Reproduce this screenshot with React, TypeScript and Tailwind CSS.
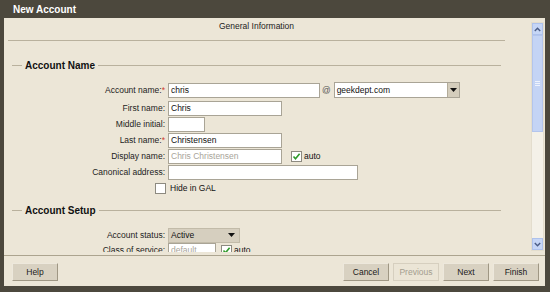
const font={fontFamily:'"Liberation Sans", Arial, sans-serif'};

function Check({on}:{on?:boolean}){
  return(
    <span className="w-[11px] h-[11px] border border-[#8d8a80] bg-white flex items-center justify-center shrink-0">
      {on&&<svg width="9" height="9" viewBox="0 0 9 9"><path d="M1.5 4.5 L3.5 6.8 L7.6 1.8" fill="none" stroke="#2f9a2a" strokeWidth="1.6"/></svg>}
    </span>
  );
}

function Tri(){
  return <svg width="7" height="4" viewBox="0 0 7 4"><path d="M0 0 H7 L3.5 4 Z" fill="#111"/></svg>;
}

function Row({label,req,children,cls=''}:{label:string;req?:boolean;children?:React.ReactNode;cls?:string}){
  return(
    <div className={`flex items-center h-[16px] ${cls}`}>
      <div className="w-[162px] text-right text-[#1c1c1c] pr-[1px] whitespace-nowrap">
        {label}{req&&<span className="text-[#d23a2a]">*</span>}
      </div>
      <div className="ml-[2px] flex items-center">{children}</div>
    </div>
  );
}

function Input({w,val,dim}:{w:number;val?:string;dim?:boolean}){
  return(
    <div className={`h-[15px] bg-white border border-[#a9a496] pl-[2px] leading-[13px] ${dim?'text-[#a8a49a]':'text-[#111]'}`} style={{width:w}}>{val}</div>
  );
}

function Heading({text}:{text:string}){
  return(
    <div className="flex items-center h-[14px] mr-[30px]">
      <div className="ml-[8px] w-[10px] border-t border-[#b9b19d]"/>
      <div className="mx-[3px] text-[10px] font-bold text-[#111]">{text}</div>
      <div className="flex-1 border-t border-[#b9b19d]"/>
    </div>
  );
}

function Btn({label,off}:{label:string;off?:boolean}){
  return(
    <div className={`w-[46px] h-[18px] flex items-center justify-center border ${off?'bg-[#ebe5d6] border-[#d6cfbf] text-[#a39d8f]':'bg-[#d8d1c1] border-t-[#ede8dc] border-l-[#ede8dc] border-r-[#9f9784] border-b-[#9f9784] text-[#1a1a1a]'}`}>{label}</div>
  );
}

export default function App(){
  return(
    <div className="w-[550px] h-[292px] bg-[#4c483d] pl-[4px] pr-[5px] pb-[6px] flex flex-col text-[8.5px]" style={font}>
      <div className="h-[18px] flex items-center pl-[9px] text-[10px] font-bold text-white">New Account</div>
      <div className="flex-1 bg-[#ece6d7] flex flex-col">
        <div className="h-[234px] flex overflow-hidden">
          <div className="flex-1 overflow-hidden">
            <div className="h-[23px] pt-[3px] leading-[11px] text-center text-[#222] border-b border-[#b9b19d] ml-[4px] mr-[26px]">General Information</div>
            <div className="mt-[17px]"><Heading text="Account Name"/></div>
            <div className="mt-[10px]">
              <Row label="Account name:" req>
                <Input w={152} val="chris"/>
                <span className="ml-[2px] mr-[3px] text-[#555]">@</span>
                <div className="w-[126px] h-[16px] bg-white border border-[#a9a496] flex">
                  <div className="flex-1 pl-[2px] leading-[14px] text-[#111]">geekdept.com</div>
                  <div className="w-[12px] bg-[#d4cdbc] border-l border-[#b3ac9a] flex items-center justify-center"><Tri/></div>
                </div>
              </Row>
              <Row label="First name:" cls="mt-[2px]"><Input w={114} val="Chris"/></Row>
              <Row label="Middle initial:"><Input w={37}/></Row>
              <Row label="Last name:" req><Input w={114} val="Christensen"/></Row>
              <Row label="Display name:">
                <Input w={114} val="Chris Christensen" dim/>
                <span className="ml-[9px]"><Check on/></span>
                <span className="ml-[2px] text-[#111]">auto</span>
              </Row>
              <Row label="Canonical address:"><Input w={190}/></Row>
              <div className="flex items-center h-[13px] mt-[2px]">
                <div className="w-[162px] flex justify-end"><Check/></div>
                <span className="ml-[4px] text-[#111]">Hide in GAL</span>
              </div>
            </div>
            <div className="mt-[8px]"><Heading text="Account Setup"/></div>
            <div className="mt-[10px]">
              <Row label="Account status:">
                <div className="w-[72px] h-[15px] bg-[#d6cfbf] border border-[#c2bba9] flex items-center pl-[2px] pr-[4px] text-[#111]">
                  <span className="flex-1">Active</span><Tri/>
                </div>
              </Row>
              <Row label="Class of service:" cls="mt-[-1px]">
                <Input w={48} val="default" dim/>
                <span className="ml-[5px]"><Check on/></span>
                <span className="ml-[2px] text-[#111]">auto</span>
              </Row>
            </div>
          </div>
          <div className="w-[13px] mt-[4px] h-[229px] mr-[1px] flex flex-col bg-[#f4f1e8] border border-[#e3ddcd]">
            <div className="h-[12px] bg-[#c6d6f6] border border-[#aec2ec] flex items-center justify-center">
              <svg width="7" height="5" viewBox="0 0 7 5"><path d="M0.8 4 L3.5 1.2 L6.2 4" fill="none" stroke="#4b5d86" strokeWidth="1.4"/></svg>
            </div>
            <div className="h-[97px] bg-[#c4d4f5] border border-[#b3c5ed] flex flex-col items-center justify-center gap-[1px]">
              <div className="w-[5px] border-t border-[#eef3fd]"/>
              <div className="w-[5px] border-t border-[#eef3fd]"/>
              <div className="w-[5px] border-t border-[#eef3fd]"/>
            </div>
            <div className="flex-1"/>
            <div className="h-[12px] bg-[#c6d6f6] border border-[#aec2ec] flex items-center justify-center">
              <svg width="7" height="5" viewBox="0 0 7 5"><path d="M0.8 1 L3.5 3.8 L6.2 1" fill="none" stroke="#4b5d86" strokeWidth="1.4"/></svg>
            </div>
          </div>
        </div>
        <div className="mt-[3px] border-t border-[#aca48f]"/>
        <div className="flex items-center pt-[7px] pl-[8px] pr-[6px]">
          <Btn label="Help"/>
          <div className="flex-1"/>
          <div className="flex gap-[4px]">
            <Btn label="Cancel"/>
            <Btn label="Previous" off/>
            <Btn label="Next"/>
            <Btn label="Finish"/>
          </div>
        </div>
      </div>
    </div>
  );
}
